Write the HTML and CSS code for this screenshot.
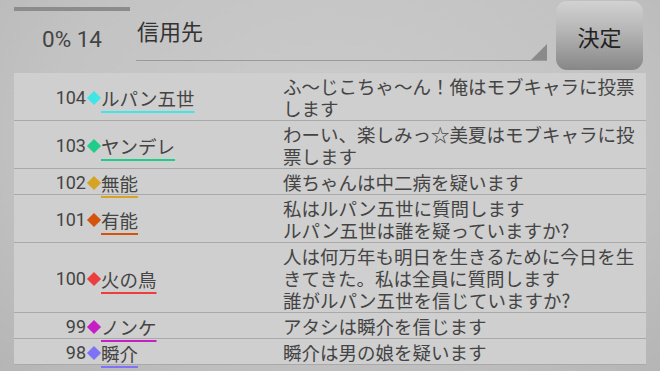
FILE: index.html
```html
<!DOCTYPE html>
<html lang="ja">
<head>
<meta charset="UTF-8">
<meta name="viewport" content="width=device-width, initial-scale=1.0">
<title>投票</title>
<link rel="stylesheet" href="styles.css">
</head>
<body>

<div class="screen">
    <div class="header">
        <div class="status">
            <div class="progress"></div>
            <div class="status-text">0% 14</div>
        </div>
        <div class="spinner">
            <span class="spinner-label">信用先</span>
            <span class="spinner-arrow"></span>
        </div>
        <button class="decide">決定</button>
    </div>

    <ul class="log">
        <li class="row">
            <div class="who"><span class="num">104</span><span class="mark" style="background:#40e6e6"></span><span class="name" style="text-decoration-color:#40e6e6">ルパン五世</span></div>
            <div class="msg">ふ〜じこちゃ〜ん！俺はモブキャラに投票します</div>
        </li>
        <li class="row">
            <div class="who"><span class="num">103</span><span class="mark" style="background:#1fcc8a"></span><span class="name" style="text-decoration-color:#1fcc8a">ヤンデレ</span></div>
            <div class="msg">わーい、楽しみっ☆美夏はモブキャラに投票します</div>
        </li>
        <li class="row">
            <div class="who"><span class="num">102</span><span class="mark" style="background:#d6a424"></span><span class="name" style="text-decoration-color:#d6a424">無能</span></div>
            <div class="msg">僕ちゃんは中二病を疑います</div>
        </li>
        <li class="row">
            <div class="who"><span class="num">101</span><span class="mark" style="background:#d4540e"></span><span class="name" style="text-decoration-color:#d4540e">有能</span></div>
            <div class="msg">私はルパン五世に質問します<br>ルパン五世は誰を疑っていますか?</div>
        </li>
        <li class="row">
            <div class="who"><span class="num">100</span><span class="mark" style="background:#ec3e3e"></span><span class="name" style="text-decoration-color:#ec3e3e">火の鳥</span></div>
            <div class="msg">人は何万年も明日を生きるために今日を生きてきた。私は全員に質問します<br>誰がルパン五世を信じていますか?</div>
        </li>
        <li class="row">
            <div class="who"><span class="num">99</span><span class="mark" style="background:#c41ec4"></span><span class="name" style="text-decoration-color:#c41ec4">ノンケ</span></div>
            <div class="msg">アタシは瞬介を信じます</div>
        </li>
        <li class="row">
            <div class="who"><span class="num">98</span><span class="mark" style="background:#7f72f6"></span><span class="name" style="text-decoration-color:#7f72f6">瞬介</span></div>
            <div class="msg">瞬介は男の娘を疑います</div>
        </li>
    </ul>
</div>

</body>
</html>
```

FILE: styles.css
```css
html, body {
    margin: 0;
    padding: 0;
    height: 100%;
}

body {
    font-family: Roboto, "Noto Sans CJK JP", sans-serif;
    background: radial-gradient(ellipse at 50% 35%, #cbcbcb 0%, #c3c3c3 60%, #b5b5b5 100%);
    color: #444;
    overflow: hidden;
}

.screen {
    padding: 0 14px;
}

/* ヘッダー */
.header {
    display: flex;
    height: 72px;
    padding-top: 1px;
}

.status {
    width: 116px;
    padding-top: 6px;
}

.progress {
    height: 4px;
    background-color: #8c8c8c;
}

.status-text {
    margin-top: 15px;
    text-align: center;
    font-size: 22.5px;
    line-height: 26px;
    color: #444;
}

.spinner {
    position: relative;
    width: 411px;
    margin-left: 6px;
    height: 59px;
    border-bottom: 1px solid #9a9a9a;
}

.spinner-label {
    display: block;
    margin-top: 18px;
    margin-left: 1px;
    font-size: 22px;
    line-height: 28px;
    color: #333;
}

.spinner-arrow {
    position: absolute;
    right: 0;
    bottom: 0;
    width: 0;
    height: 0;
    border-left: 16px solid transparent;
    border-bottom: 16px solid #8a8a8a;
}

.decide {
    width: 87px;
    height: 69px;
    margin-left: 9px;
    border: none;
    border-radius: 11px;
    background: linear-gradient(to bottom, #d2d2d2 0%, #b4b4b4 45%, #878787 100%);
    font-family: "Noto Sans CJK JP", sans-serif;
    font-size: 22px;
    color: #222;
    padding: 1px 0 0 0;
}

/* ログ */
.log {
    list-style: none;
    margin: 0;
    padding: 0;
    background-color: #cfcfcf;
}

.row {
    display: flex;
    border-bottom: 1px solid #a9a9a9;
    font-size: 18.5px;
    line-height: 22px;
}

.who {
    width: 269px;
    flex-shrink: 0;
    display: flex;
    align-items: center;
    padding-top: 2px;
}

.num {
    width: 72px;
    text-align: right;
    font-size: 18px;
}

.mark {
    display: inline-block;
    width: 10px;
    height: 10px;
    margin: 0 2px 0 3px;
    transform: rotate(45deg);
}

.name {
    margin-left: 0;
    font-family: "Noto Sans CJK JP", sans-serif;
    text-decoration: underline;
    text-decoration-thickness: 2px;
    text-underline-offset: 5px;
}

.msg {
    flex: 1;
    padding: 2px 0 1px;
    font-family: "Noto Sans CJK JP", sans-serif;
    color: #444;
}
```
